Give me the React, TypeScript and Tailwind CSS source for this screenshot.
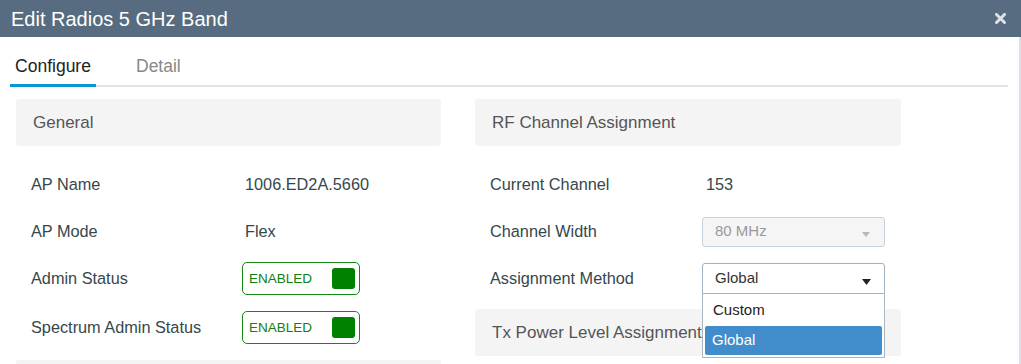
import React from 'react'

function Row({ label, labelW = 214, children }: { label: string; labelW?: number; children: React.ReactNode }) {
  return (
    <div className="flex items-center h-[47px] pl-[15px]">
      <div className={`${labelW === 214 ? 'w-[214px]' : 'w-[216px]'} text-[16.3px] text-[#36474c] whitespace-nowrap`}>{label}</div>
      <div className="flex-1 text-[16.3px] text-[#36474c]">{children}</div>
    </div>
  )
}

function Toggle() {
  return (
    <div className="w-[118px] h-[33px] -ml-[3px] border border-[#128a12] rounded-[5px] flex items-center justify-between pl-[6px] pr-[4px]">
      <span className="text-[13.5px] text-[#108010] pt-[2px]">ENABLED</span>
      <span className="w-[23px] h-[21px] bg-[#008000] rounded-[3px]" />
    </div>
  )
}

function Caret({ color, w, h }: { color: string; w: number; h: number }) {
  return (
    <svg width={w} height={h} viewBox={`0 0 ${w} ${h}`} className="mt-[6px]">
      <path d={`M0 0 L${w} 0 L${w / 2} ${h} Z`} fill={color} />
    </svg>
  )
}

function Section({ title }: { title: string }) {
  return (
    <div className="h-[47px] bg-[#f4f4f4] rounded-[3px] flex items-center px-[17px] text-[17px] text-[#555] whitespace-nowrap overflow-hidden">
      {title}
    </div>
  )
}

export default function App() {
  return (
    <div className="w-[1021px] h-[364px] overflow-hidden bg-white font-['Liberation_Sans',Arial,sans-serif]">
      <div className="h-[37px] bg-[#576c80] flex items-center justify-between pl-[11px] pr-[15px]">
        <span className="text-[20px] text-white">Edit Radios 5 GHz Band</span>
        <svg width="11" height="11" viewBox="0 0 11 11">
          <path d="M1.5 1.5 L9.5 9.5 M9.5 1.5 L1.5 9.5" stroke="#dfe3e8" strokeWidth="3" strokeLinecap="square" />
        </svg>
      </div>

      <div className="h-[327px] border-r-2 border-[#dde1e6] overflow-hidden">
        <div className="ml-[10px] mr-[11px] mt-[13px] flex border-b-2 border-[#e1e2e6]">
          <div className="w-[86px] h-[37px] text-center text-[17.5px] leading-[20px] text-[#222] pt-[6px] border-b-[3px] border-[#0a95d4] -mb-[2px]">Configure</div>
          <div className="ml-[40px] text-[17.5px] leading-[20px] text-[#888] pt-[6px]">Detail</div>
        </div>

        <div className="flex gap-[34px] pl-[16px] pt-[12px]">
          <div className="w-[425px]">
            <Section title="General" />
            <div className="pt-[15px]">
              <Row label="AP Name">1006.ED2A.5660</Row>
              <Row label="AP Mode">Flex</Row>
              <Row label="Admin Status"><Toggle /></Row>
              <div className="h-[2px]" />
              <Row label="Spectrum Admin Status"><Toggle /></Row>
              <div className="mt-[9px] h-[40px] bg-[#f4f4f4] rounded-[3px]" />
            </div>
          </div>

          <div className="w-[426px]">
            <Section title="RF Channel Assignment" />
            <div className="pt-[15px]">
              <Row label="Current Channel" labelW={216}>153</Row>
              <Row label="Channel Width" labelW={216}>
                <div className="w-[183px] h-[30px] -ml-[4px] border border-[#c8d2dc] rounded-[3px] bg-[#f5f5f5] flex items-center justify-between pl-[12px] pr-[14px]">
                  <span className="text-[#999] text-[15px]">80 MHz</span>
                  <Caret color="#b8b8b8" w={8} h={5} />
                </div>
              </Row>
              <Row label="Assignment Method" labelW={216}>
                <div className="relative w-[183px] -ml-[4px]">
                  <div className="h-[31px] border border-[#9fb2c4] rounded-t-[3px] bg-white flex items-center justify-between pl-[12px] pr-[13px]">
                    <span className="text-[#333] text-[15px]">Global</span>
                    <Caret color="#222" w={9} h={6} />
                  </div>
                  <div className="absolute left-0 top-[31px] z-10 w-[183px] bg-white border border-[#aab6c2] border-t-0 px-[2px] pb-[2px]">
                    <div className="h-[32px] flex items-center pl-[8px] text-[15px] text-[#222]">Custom</div>
                    <div className="h-[29px] flex items-center pl-[7px] text-[15px] text-white bg-[#418ccb] rounded-[2px]">Global</div>
                  </div>
                </div>
              </Row>
              <div className="mt-[7px] h-[47px] bg-[#f4f4f4] rounded-[3px] flex items-center px-[17px] text-[17px] text-[#555] overflow-hidden whitespace-nowrap">
                Tx Power Level Assignment
              </div>
            </div>
          </div>
        </div>
      </div>
    </div>
  )
}
